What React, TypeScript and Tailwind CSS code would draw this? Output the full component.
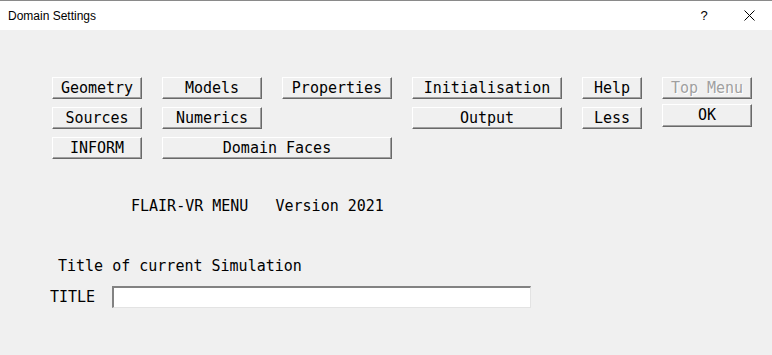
const mono = "font-['DejaVu_Sans_Mono',monospace] text-[15px] leading-none";

function Btn({
  label,
  className = "",
  disabled = false,
}: {
  label: string;
  className?: string;
  disabled?: boolean;
}) {
  return (
    <button
      className={`h-[22px] flex items-center justify-center bg-[#f0f0f0] border-t border-l border-t-white border-l-white border-r border-b border-r-[#696969] border-b-[#696969] shadow-[inset_-1px_-1px_0_#a0a0a0] ${mono} ${
        disabled ? "text-[#a0a0a0] [text-shadow:1px_1px_0_#ffffff]" : "text-black"
      } ${className}`}
    >
      {label}
    </button>
  );
}

export default function App() {
  return (
    <div className="w-[772px] h-[355px] flex flex-col bg-[#f0f0f0] overflow-hidden">
      {/* title bar */}
      <div className="h-[30px] flex items-center bg-white border-t border-[#8a8a8a]">
        <span className="pl-2 text-[12px] text-black font-['Liberation_Sans',Arial,sans-serif]">
          Domain Settings
        </span>
        <span className="ml-auto w-[46px] pl-[2px] text-center text-[13px] text-black font-['Liberation_Sans',Arial,sans-serif]">
          ?
        </span>
        <span className="w-[46px] flex items-center justify-center">
          <svg width="11" height="11" viewBox="0 0 11 11">
            <path d="M0.5 0.5 L10.5 10.5 M10.5 0.5 L0.5 10.5" stroke="#000" strokeWidth="1" />
          </svg>
        </span>
      </div>

      {/* body */}
      <div className="flex flex-col pl-[52px] pt-[47px]">
        <div className="grid grid-cols-[90px_100px_110px_150px_60px_90px] gap-x-5 gap-y-2">
          <Btn label="Geometry" />
          <Btn label="Models" />
          <Btn label="Properties" />
          <Btn label="Initialisation" />
          <Btn label="Help" />
          <Btn label="Top Menu" disabled />

          <Btn label="Sources" />
          <Btn label="Numerics" />
          <div />
          <Btn label="Output" />
          <Btn label="Less" />
          <Btn label="OK" className="h-[23px] -mt-[3px]" />

          <Btn label="INFORM" />
          <Btn label="Domain Faces" className="col-span-2" />
        </div>

        <div className={`mt-[40px] pl-[79px] whitespace-pre text-black ${mono}`}>
          {"FLAIR-VR MENU   Version 2021"}
        </div>

        <div className={`mt-[45px] pl-[6px] text-black ${mono}`}>Title of current Simulation</div>

        <div className="mt-[12px] -ml-[2px] flex items-center">
          <span className={`w-[62px] text-black ${mono}`}>TITLE</span>
          <div className="w-[419px] h-[22px] bg-white border-t-2 border-l-2 border-t-[#828282] border-l-[#828282] border-r border-b border-r-[#e3e3e3] border-b-[#e3e3e3]" />
        </div>
      </div>
    </div>
  );
}
